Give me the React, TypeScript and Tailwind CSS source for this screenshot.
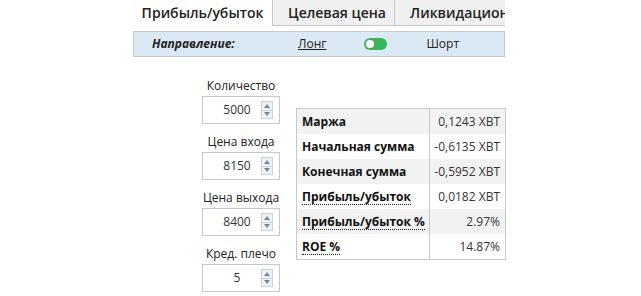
import React from "react";

const font = { fontFamily: '"Open Sans", "Noto Sans", sans-serif' };

function Spinner() {
  return (
    <div className="flex h-[18px] w-[12px] flex-col border border-[#c9d3dc] bg-[#eef2f6]">
      <div className="flex flex-1 items-center justify-center border-b border-[#c9d3dc]">
        <svg width="6" height="4" viewBox="0 0 6 4"><path d="M0 4 L3 0 L6 4 Z" fill="#6f8aa6" /></svg>
      </div>
      <div className="flex flex-1 items-center justify-center">
        <svg width="6" height="4" viewBox="0 0 6 4"><path d="M0 0 L3 4 L6 0 Z" fill="#6f8aa6" /></svg>
      </div>
    </div>
  );
}

function Field({ label, value }: { label: string; value: string }) {
  return (
    <div className="flex flex-col items-center">
      <div className="h-[20px] text-[12px] leading-[20px] text-[#222]">{label}</div>
      <div className="flex h-[28px] w-[78px] items-center border border-[#c8c8c8] bg-white pl-[10px] pr-[6px]">
        <div className="flex-1 text-center text-[12px] text-[#333]">{value}</div>
        <Spinner />
      </div>
    </div>
  );
}

const rows: [string, string, boolean][] = [
  ["Маржа", "0,1243 XBT", false],
  ["Начальная сумма", "-0,6135 XBT", false],
  ["Конечная сумма", "-0,5952 XBT", false],
  ["Прибыль/убыток", "0,0182 XBT", true],
  ["Прибыль/убыток %", "2.97%", true],
  ["ROE %", "14.87%", true],
];

export default function App() {
  return (
    <div className="h-[296px] w-[641px] bg-white" style={font}>
      <div className="ml-[133px] w-[372px] overflow-hidden">
        <div className="flex h-[26px] whitespace-nowrap border-b border-[#c8c8c8]">
          <div className="-mb-px flex w-[139px] shrink-0 items-center justify-center border-b border-white bg-white text-[14px] font-semibold text-[#222]">
            Прибыль/убыток
          </div>
          <div className="flex w-[122px] shrink-0 items-center border-l border-[#c8c8c8] bg-[#f0f0f0] pl-[15px] text-[14px] font-semibold text-[#222]">
            Целевая цена
          </div>
          <div className="flex w-[140px] shrink-0 items-center border-l border-[#c8c8c8] bg-[#f0f0f0] pl-[15px] text-[14px] font-semibold text-[#222]">
            Ликвидационная
          </div>
        </div>
        <div className="mt-[5px] flex h-[26px] items-center whitespace-nowrap border border-[#c8c8c8] bg-[#dbe9f4] text-[12px] text-[#222]">
          <div className="ml-[18px] w-[146px] font-bold italic">Направление:</div>
          <div className="underline">Лонг</div>
          <div className="ml-[38px] flex h-[12px] w-[23px] items-center rounded-full bg-[#3bb55a] pl-[2px]">
            <div className="h-[8px] w-[8px] rounded-full bg-white" />
          </div>
          <div className="ml-[39px]">Шорт</div>
        </div>
      </div>
      <div className="ml-[202px] mt-[19px] flex items-start">
        <div className="flex flex-col gap-[8px]">
          <Field label="Количество" value="5000" />
          <Field label="Цена входа" value="8150" />
          <Field label="Цена выхода" value="8400" />
          <Field label="Кред. плечо" value="5" />
        </div>
        <div className="ml-[16px] mt-[32px] w-[210px] border border-[#c8c8c8] text-[12px] text-[#111]">
          {rows.map(([k, v, dotted], i) => (
            <div key={k} className={`flex h-[25px] items-center ${i % 2 === 0 ? "bg-[#f2f2f2]" : "bg-white"}`}>
              <div className="flex w-[133px] items-center self-stretch border-r border-[#c8c8c8] pl-[5px] font-bold">
                <span className={dotted ? "border-b border-dotted border-[#222] leading-[15px]" : ""}>{k}</span>
              </div>
              <div className="flex-1 pr-[5px] text-right text-[#333]">{v}</div>
            </div>
          ))}
        </div>
      </div>
    </div>
  );
}
